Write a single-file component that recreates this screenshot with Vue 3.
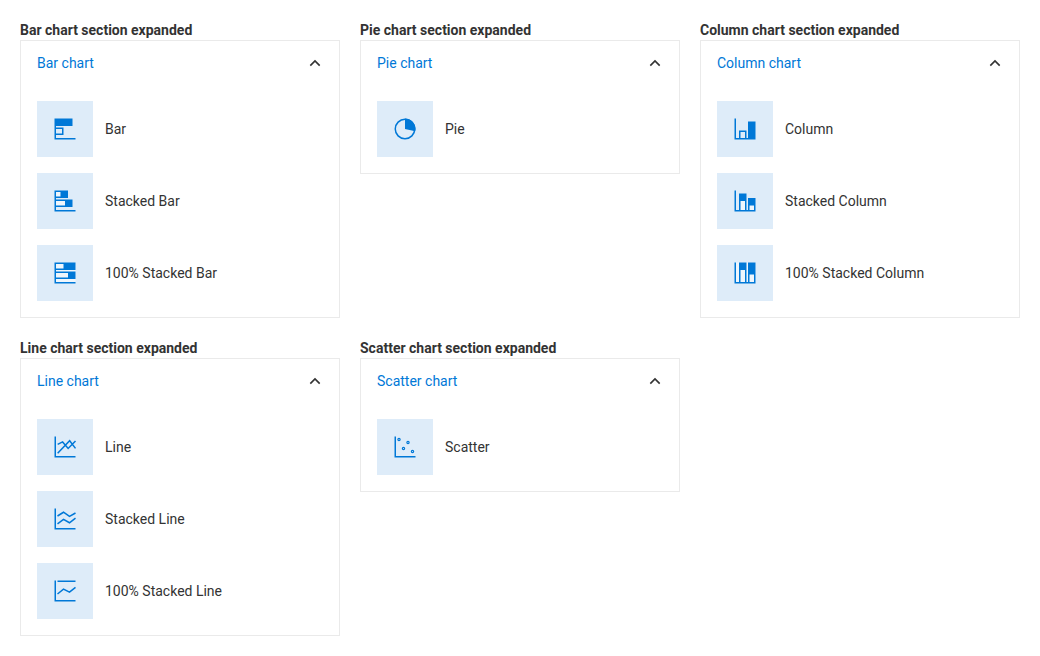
<script setup>
const blue = '#0078d7'
const axis = 'M1 1h1v13h13v1H1z'
const sections = [
  {
    name: 'Bar chart',
    items: [
      { label: 'Bar', fill: axis + 'M1 1h12v5H1zM2 7h5v5H2V11h4V8H2z' },
      { label: 'Stacked Bar', light: 'M2 2h3v3H2zM2 8h6v3H2z', fill: axis + 'M2 1h8v5H2V5h3V2H2zM2 7h11v5H2V11h6V8H2z' },
      { label: '100% Stacked Bar', light: 'M2 2h13v12H2z', fill: axis + 'M2 1h13v5H2V5h5V2H2zM2 7h13v5H2V11h8V8H2z' }
    ]
  },
  {
    name: 'Pie chart',
    items: [{ label: 'Pie', fill: 'M8 1a7 7 0 0 1 6.85 8.45L8 8z', circles: [[8, 8, 6.5]], stroke: 1 }]
  },
  {
    name: 'Column chart',
    items: [
      { label: 'Column', fill: axis + 'M10 3h5v12h-5zM4 14V9h5v5H8v-4H5v4z' },
      { label: 'Stacked Column', light: 'M5 8h3v6H5zM11 11h3v3h-3z', fill: axis + 'M4 14V3h5v11H8V8H5v6zM10 14V6h5v8h-1v-3h-3v3z' },
      { label: '100% Stacked Column', light: 'M2 1h13v13H2z', fill: axis + 'M4 14V1h5v13H8V6H5v8zM10 14V1h5v13h-1V9h-3v5z' }
    ]
  },
  {
    name: 'Line chart',
    items: [
      { label: 'Line', fill: axis, line: 'M3.1 12.2L11.1 3.8L15 8.9M3.1 6.2L6.4 4.6L10.1 9L15 4' },
      { label: 'Stacked Line', fill: axis, line: 'M3 6L7 3.5L11 6.3L15 4M3 11.3L7 8.3L11 10.5L15 7.4' },
      { label: '100% Stacked Line', fill: axis + 'M3 1h12v1H3z', line: 'M3 10L7 6.8L11 8.8L15 5.6' }
    ]
  },
  {
    name: 'Scatter chart',
    items: [{ label: 'Scatter', fill: axis, circles: [[4, 3, 0.75], [10, 5, 0.75], [7, 9, 0.75], [13, 11, 0.75]], stroke: 0.8 }]
  }
]
</script>

<template>
  <main class="gallery">
    <section v-for="s in sections" :key="s.name">
      <h2>{{ s.name }} section expanded</h2>
      <div class="panel">
        <header>
          <span>{{ s.name }}</span>
          <svg class="chevron" width="12" height="12" viewBox="0 0 12 12"><path d="M1.3 8.6L6 3.9L10.7 8.6" /></svg>
        </header>
        <ul>
          <li v-for="item in s.items" :key="item.label">
            <span class="tile">
              <svg width="24" height="24" viewBox="0 0 16 16">
                <path v-if="item.light" :d="item.light" fill="#eff6fc" />
                <path :d="item.fill" :fill="blue" />
                <path v-if="item.line" :d="item.line" fill="none" :stroke="blue" />
                <circle v-for="(c, i) in item.circles || []" :key="i" :cx="c[0]" :cy="c[1]" :r="c[2]" fill="none" :stroke="blue" :stroke-width="item.stroke" />
              </svg>
            </span>
            <span>{{ item.label }}</span>
          </li>
        </ul>
      </div>
    </section>
  </main>
</template>

<style>
body { background: #fff; }
</style>

<style scoped>
.gallery {
  display: grid;
  grid-template-columns: repeat(3, 320px);
  column-gap: 20px;
  row-gap: 20px;
  align-items: start;
  padding: 20px;
  color: #333;
  font: 14px/20px Roboto, sans-serif;
  -webkit-font-smoothing: antialiased;
}
h2 { margin: 0; font-size: 14px; line-height: 20px; font-weight: 700; }
.panel { box-sizing: border-box; border: 1px solid #eaeaea; padding: 0 16px 16px; }
header { display: flex; align-items: center; justify-content: space-between; height: 44px; color: #0078d7; padding-right: 2px; }
.chevron path { fill: none; stroke: #333; stroke-width: 1.6; }
ul { list-style: none; margin: 16px 0 0; padding: 0; display: flex; flex-direction: column; gap: 16px; }
li { display: flex; align-items: center; gap: 12px; }
.tile { display: flex; align-items: center; justify-content: center; width: 56px; height: 56px; background: #deecf9; }
svg { display: block; }
</style>
